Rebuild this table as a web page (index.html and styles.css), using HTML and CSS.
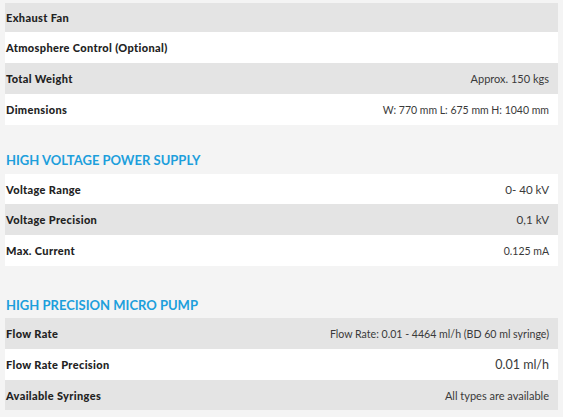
FILE: index.html
```html
<!DOCTYPE html>
<html>
<head>
<meta charset="utf-8">
<link rel="stylesheet" href="styles.css">
</head>
<body>
<div class="page">
  <div class="specs">
    <div class="row gray first"><span class="label">Exhaust Fan</span><span class="value"></span></div>
    <div class="row"><span class="label">Atmosphere Control (Optional)</span><span class="value"></span></div>
    <div class="row gray"><span class="label">Total Weight</span><span class="value">Approx. 150 kgs</span></div>
    <div class="row"><span class="label">Dimensions</span><span class="value dims">W: 770 mm L: 675 mm H: 1040 mm</span></div>
  </div>

  <h2 class="section-title t1">HIGH VOLTAGE POWER SUPPLY</h2>
  <div class="specs">
    <div class="row short"><span class="label">Voltage Range</span><span class="value kv">0- 40 kV</span></div>
    <div class="row gray"><span class="label">Voltage Precision</span><span class="value kv">0,1 kV</span></div>
    <div class="row"><span class="label">Max. Current</span><span class="value dims">0.125 mA</span></div>
  </div>

  <h2 class="section-title t2">HIGH PRECISION MICRO PUMP</h2>
  <div class="specs">
    <div class="row gray"><span class="label">Flow Rate</span><span class="value flow">Flow Rate: 0.01 - 4464 ml/h (BD 60 ml syringe)</span></div>
    <div class="row"><span class="label">Flow Rate Precision</span><span class="value big">0.01 ml/h</span></div>
    <div class="row gray short"><span class="label">Available Syringes</span><span class="value">All types are available</span></div>
  </div>
</div>
</body>
</html>
```

FILE: styles.css
```css
html, body {
  margin: 0;
  padding: 0;
  background: #f4f4f4;
}
body {
  font-family: "Lato", "Open Sans", sans-serif;
  width: 563px;
  height: 417px;
  overflow: hidden;
}
.page {
  padding: 3px 5px 0 5px;
}
.specs {
  display: flex;
  flex-direction: column;
  width: 553px;
}
.row {
  height: 31px;
  display: flex;
  align-items: center;
  justify-content: space-between;
  background: #ffffff;
  padding: 0 9px 0 1px;
  box-sizing: border-box;
}
.row.gray {
  background: #e4e4e4;
}
.row.first {
  height: 29px;
}
.row.short {
  height: 30px;
}
.label {
  font-weight: 900;
  font-size: 11px;
  color: #222222;
  letter-spacing: 0.35px;
}
.value {
  font-size: 11px;
  color: #3a3a3a;
}
.value.dims {
  font-size: 10.5px;
}
.value.flow {
  font-size: 10.6px;
}
.value.kv {
  font-size: 11.6px;
}
.value.big {
  font-size: 12.5px;
}
.section-title {
  margin: 0;
  font-size: 13px;
  line-height: 16px;
  font-weight: 700;
  color: #1d9fdc;
  padding-left: 1px;
}
.t1 {
  padding-top: 27px;
  padding-bottom: 6px;
}
.t2 {
  padding-top: 31px;
  padding-bottom: 5px;
}
```
